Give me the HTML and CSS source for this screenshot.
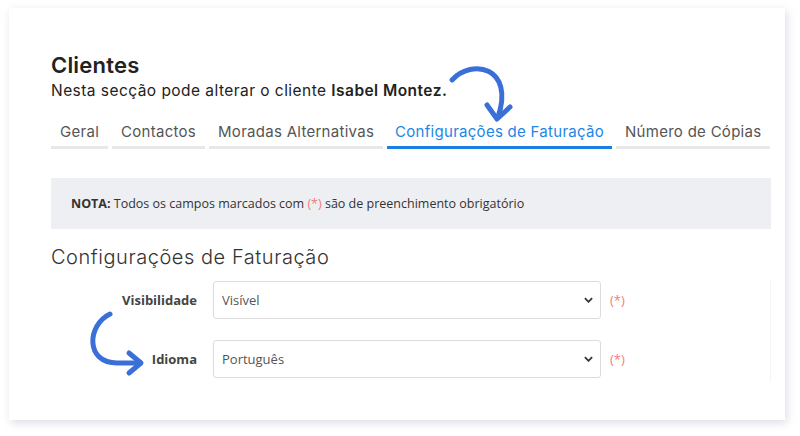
FILE: index.html
```html
<!DOCTYPE html>
<html lang="pt">
<head>
    <meta charset="UTF-8">
    <title>Clientes</title>
    <link rel="stylesheet" href="styles.css">
</head>
<body>

    <div class="card">
        <h1>Clientes</h1>
        <p class="sub">Nesta secção pode alterar o cliente <strong>Isabel Montez.</strong></p>

        <div class="tabs">
            <span class="tab">Geral</span>
            <span class="tab">Contactos</span>
            <span class="tab">Moradas Alternativas</span>
            <span class="tab ativo">Configurações de Faturação</span>
            <span class="tab">Número de Cópias</span>
        </div>

        <div class="nota"><b>NOTA:</b> Todos os campos marcados com <span class="obrig">(*)</span> são de preenchimento obrigatório</div>

        <h2>Configurações de Faturação</h2>

        <div class="painel">
            <div class="linha">
                <label>Visibilidade</label>
                <div class="campo">Visível<svg viewBox="0 0 10 6"><path d="M1 1l4 4 4-4"/></svg></div>
                <span class="obrig">(*)</span>
            </div>
            <div class="linha">
                <label>Idioma</label>
                <div class="campo">Português<svg viewBox="0 0 10 6"><path d="M1 1l4 4 4-4"/></svg></div>
                <span class="obrig">(*)</span>
            </div>
        </div>

        <!-- setas de destaque -->
        <svg class="seta seta1" viewBox="0 0 80 75"><path d="M12 25 C32 3, 75 12, 58 62"/><path d="M47 50 L57 64 L70 52"/></svg>
        <svg class="seta seta2" viewBox="0 0 65 75"><path d="M25 9 C2 20, 0 58, 32 58 L54 58"/><path d="M44 48 L56 58 L44 68"/></svg>
    </div>

</body>
</html>
```

FILE: styles.css
```css
body { margin: 0; background: #fff; font-family: Inter, "Open Sans", sans-serif; color: #2b2b2b; }
.card { position: relative; margin: 8px 15px 16px 9px; height: 412px; box-sizing: border-box; padding: 44px 14px 0 42px; background: #fff; box-shadow: 2px 3px 8px rgba(120, 125, 160, 0.25); }
h1 { margin: 0; font-size: 22px; font-weight: 600; color: #222; line-height: 26px; letter-spacing: 0.2px; }
.sub { margin: 3px 0 0; font-size: 15.5px; color: #222; line-height: 20px; letter-spacing: 0.45px; }
.sub strong { font-weight: 600; }
.tabs { display: flex; gap: 4px; margin-top: 13px; white-space: nowrap; }
.tab { flex-shrink: 0; padding: 8px 9px 5px; font-size: 15px; color: #555; letter-spacing: 0.28px; border-bottom: 3px solid #e8e8e8; }
.tab.ativo { color: #1e86e6; border-bottom-color: #1a7fe3; padding: 8px 8px 5px; }
.nota { margin-top: 29px; background: #eeeff2; padding: 17px 20px 17px; font-family: "Open Sans", sans-serif; font-size: 12.5px; color: #333; }
.nota b { font-weight: 700; }
.obrig { color: #f47c7c; }
h2 { margin: 15px 0 0; font-size: 20px; font-weight: 300; color: #333; line-height: 26px; letter-spacing: 0.55px; }
.painel { margin-top: 9px; border-right: 1px solid #f4f4f4; display: flex; flex-direction: column; gap: 21px; padding: 2px 0 4px; }
.linha { display: flex; align-items: center; font-family: "Open Sans", sans-serif; }
.linha label { width: 146px; text-align: right; font-size: 13px; font-weight: 700; color: #444; margin-right: 16px; }
.campo { position: relative; width: 388px; height: 38px; box-sizing: border-box; border: 1px solid #dcdcdc; border-radius: 3px; padding: 0 8px; display: flex; align-items: center; font-size: 13px; color: #555; }
.campo svg { position: absolute; right: 7px; top: 15px; width: 9px; height: 6px; fill: none; stroke: #333; stroke-width: 2; }
.linha .obrig { margin-left: 9px; font-size: 13px; }
.seta { position: absolute; fill: none; stroke: #3a6fd8; stroke-width: 5; stroke-linecap: round; stroke-linejoin: round; }
.seta1 { left: 431px; top: 47px; width: 80px; height: 75px; }
.seta2 { left: 76px; top: 297px; width: 65px; height: 75px; }
```
